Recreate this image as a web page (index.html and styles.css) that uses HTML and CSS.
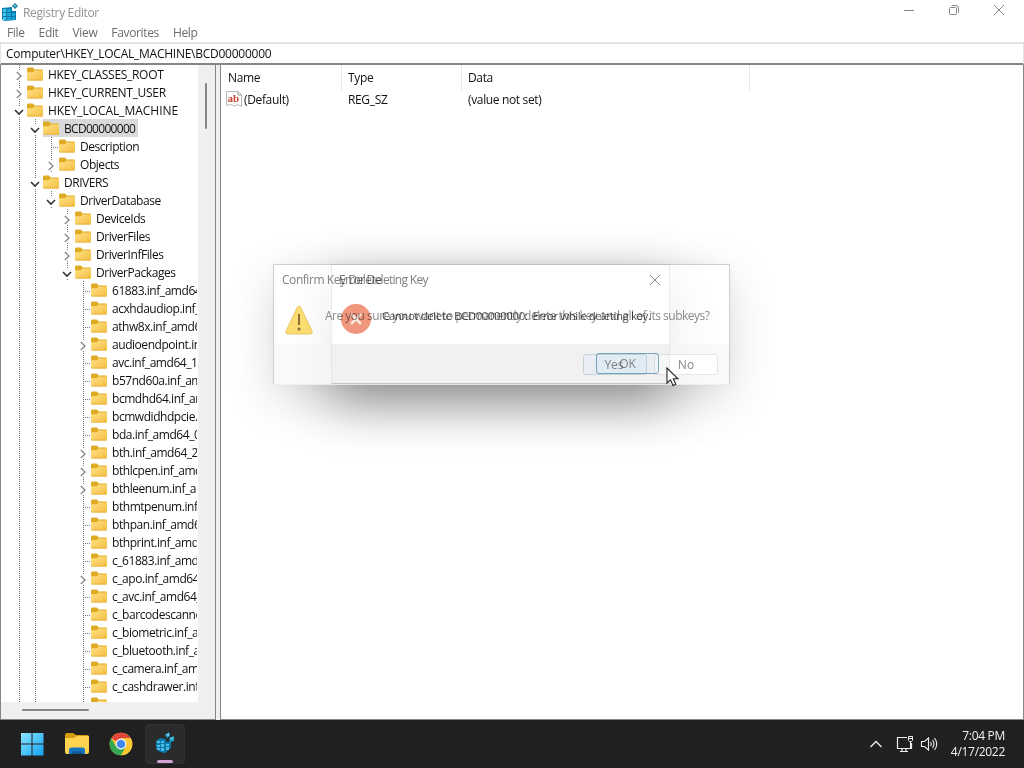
FILE: index.html
```html
<!DOCTYPE html>
<html lang="en">
<head>
<meta charset="UTF-8">
<meta name="viewport" content="width=device-width, initial-scale=1.0">
<title>Registry Editor</title>
<link rel="stylesheet" href="styles.css">
</head>
<body>

<!-- shared icons -->
<svg class="defs" width="0" height="0">
  <defs>
    <linearGradient id="folderFill" x1="0" y1="0" x2="1" y2="1"><stop offset="0" stop-color="#ffe28a"/><stop offset="1" stop-color="#f4bd3d"/></linearGradient>
    <linearGradient id="winFill" x1="0" y1="0" x2="1" y2="1"><stop offset="0" stop-color="#8be6fd"/><stop offset="1" stop-color="#12a2f4"/></linearGradient>
  </defs>
  <symbol id="folder" viewBox="0 0 16 14">
    <path d="M0 2Q0 .5 1.2 .5H6L7.600 2.500H14.8Q16 2.500 16 3.700V8H0Z" fill="#dfab22"/>
    <path d="M0 5.200H5.800L7.600 3.500H16V12.500Q16 13.500 15 13.500H1Q0 13.500 0 12.500Z" fill="url(#folderFill)"/>
    <path d="M.5 13.100H15.5" stroke="#e5ad38" stroke-width=".8"/>
  </symbol>
  <symbol id="right" viewBox="0 0 10 10"><path d="M2.8 1L7 5L2.8 9" fill="none" stroke="#8b8b8b" stroke-width="1.4"/></symbol>
  <symbol id="down" viewBox="0 0 10 10"><path d="M1 3L5 7L9 3" fill="none" stroke="#333" stroke-width="1.6"/></symbol>
</svg>

<div class="window">
  <div class="titlebar">
    <svg class="app-icon" width="17" height="18" viewBox="0 0 17 18">
      <path d="M0 5L10 4V8H14V17L2 18L0 16Z" fill="#087ca9"/>
      <path d="M1 6h3v3H1zM1 10h3v3H1zM1 14h3v3H1z" fill="#45c7ee"/>
      <path d="M5 6h4v3H5zM5 10h4v3H5zM5 14h4v3H5zM10 10h3v3h-3zM10 14h3v3h-3z" fill="#19a4d5"/>
      <path d="M13 0L16 3L13 6L10 3Z" fill="#19799b"/><path d="M13 1.2L14.7 3L13 4.2L11.3 3Z" fill="#5cc2df"/>
    </svg>
    <span class="title">Registry Editor</span>
    <div class="controls">
      <svg width="12" height="12"><path d="M1 6.5H11" stroke="#888"/></svg>
      <svg width="12" height="12"><path d="M3.5 1.5H8Q10.500 1.500 10.500 4V8.500" fill="none" stroke="#888"/><rect x="1.500" y="3.500" width="7" height="7" rx="1" fill="none" stroke="#888"/></svg>
      <svg width="12" height="12"><path d="M1 1L11 11M11 1L1 11" stroke="#888"/></svg>
    </div>
  </div>
  <div class="menu"><span>File</span><span>Edit</span><span>View</span><span>Favorites</span><span>Help</span></div>
  <div class="address"><span>Computer\HKEY_LOCAL_MACHINE\BCD00000000</span></div>

  <div class="panes">
    <div class="tree-pane">
      <div class="tree" id="tree"></div>
      <div class="vscroll"><div class="vthumb"></div></div>
      <div class="hscroll"><div class="hthumb"></div></div>
    </div>
    <div class="values">
      <div class="cols head"><span>Name</span><span>Type</span><span>Data</span></div>
      <div class="cols value">
        <span><svg width="16" height="16" viewBox="0 0 16 16"><path d="M.5 .5H12L15.500 4V15.500L12 13.500L9 15L5 13.500L.5 14.500Z" fill="#fff" stroke="#bbb"/><path d="M12 .5V4H15.500" fill="none" stroke="#999"/><text x="1.500" y="11" class="ab">ab</text></svg>(Default)</span>
        <span>REG_SZ</span><span>(value not set)</span>
      </div>
    </div>
  </div>
</div>

<div class="taskbar">
  <div class="apps">
    <div class="app"><svg width="24" height="24"><path d="M1 1H11.500V11.500H1ZM12.500 1H23.500V11.500H12.500ZM1 12.500H11.500V23.500H1ZM12.500 12.500H23.500V23.500H12.500Z" fill="url(#winFill)"/></svg></div>
    <div class="app"><svg width="26" height="24"><path d="M1 3Q1 1 3 1H9L12 3H23Q25 3 25 5V12H1Z" fill="#d79b10"/><path d="M1 6H10L13 4H25V20Q25 22 23 22H3Q1 22 1 20Z" fill="#ffd34f"/><path d="M5 22V18Q5 15.500 7.500 15.500H18.500Q21 15.500 21 18V22Z" fill="#1474bd"/><path d="M8 22V19.500H18V22Z" fill="#0c5a99"/></svg></div>
    <div class="app"><svg width="24" height="24" viewBox="0 0 24 24"><circle cx="12" cy="12" r="11.300" fill="#fbc934"/><path d="M12 12L2.200 6.300A11.300 11.300 0 0 1 21.800 6.300H12Z" fill="#e0483b"/><path d="M2.200 6.300L7.500 15.200L12 17L12 23.300A11.300 11.300 0 0 1 2.200 6.300Z" fill="#36a852"/><path d="M12 23.300L17 14.500L12 12L7.500 15.200L11 18Z" fill="#36a852"/><path d="M12 23.300L17.200 14.500V6.300H21.800A11.300 11.300 0 0 1 12 23.300Z" fill="#fbc934"/><circle cx="12" cy="12" r="5.400" fill="#fff"/><circle cx="12" cy="12" r="4.300" fill="#4286ef"/></svg></div>
    <div class="app active"><svg width="20" height="22" viewBox="0 0 20 22"><path d="M1 9L5 6L11 7V10L16 9V16L10 21L5 20L1 17Z" fill="#087aaa"/><path d="M2 9h3v2H2zM2 13h3v2H2zM2 16h3v2H2zM6 9h3v2H6zM6 12h3v3H6zM6 16h3v3H6zM11 12h3v2h-3zM11 15h3v3h-3z" fill="#4fb9e2"/><path d="M10 3L14 0L15 4L12 6ZM14 6L19 4V9L15 10Z" fill="#249fcb"/><path d="M11 3L14 1V4ZM15 6L18 5V7Z" fill="#79d4ef"/></svg></div>
  </div>
  <div class="tray">
    <svg class="up" width="14" height="10"><path d="M1.500 8L7 2.500L12.500 8" fill="none" stroke="#eee" stroke-width="1.300"/></svg>
    <svg class="net" width="18" height="18"><path d="M11 2.500H1.500V13.500H15.500V8M6 13.500V16.500M10 13.500V16.500M4 16.500H12" fill="none" stroke="#eee" stroke-width="1.200"/><path d="M12.500 1.500H16.500V5.500L15.500 6.500H13.500L12.500 5.500ZM14.500 6.500V13.500M12.500 3.500H16.500" fill="none" stroke="#eee"/></svg>
    <svg width="18" height="16"><path d="M1.500 5.500H4.500L8.500 2V14L4.500 10.500H1.500Z" fill="none" stroke="#eee" stroke-width="1.100"/><path d="M10.500 6Q12 8 10.500 10M12.500 4Q15.500 8 12.500 12M14.500 2Q19 8 14.500 14" fill="none" stroke="#eee" stroke-width="1.100"/></svg>
    <div class="clock"><span>7:04 PM</span><span>4/17/2022</span></div>
  </div>
</div>

<!-- one dialog fading out while the next fades in -->
<div class="shadow"></div>
<div class="dialog confirm">
  <div class="dialog-title">Confirm Key Delete</div>
  <div class="dialog-body">
    <svg width="28" height="30" viewBox="0 0 28 30"><path d="M12.500 2Q14 0 15.500 2L27 26Q28 29 25 29H3Q0 29 1 26Z" fill="#fbdc70" stroke="#e7c769"/><path d="M14 9V20" stroke="#8b7138" stroke-width="2"/><circle cx="14" cy="24" r="1.600" fill="#8b7138"/></svg>
    <span>Are you sure you want to permanently delete this key and all of its subkeys?</span>
  </div>
  <div class="dialog-foot"><button class="primary">Yes</button><button>No</button></div>
</div>
<div class="dialog error">
  <div class="dialog-title">Error Deleting Key
    <svg width="12" height="12"><path d="M1 1L11 11M11 1L1 11" stroke="#888"/></svg>
  </div>
  <div class="dialog-body">
    <svg width="32" height="32" viewBox="0 0 32 32"><circle cx="16" cy="16" r="15" fill="#f0977d"/><path d="M11 11L21 21M21 11L11 21" stroke="#fce8e2" stroke-width="2.500"/></svg>
    <span>Cannot delete BCD00000000:&nbsp; Error while deleting key.</span>
  </div>
  <div class="dialog-foot"><button class="primary">OK</button></div>
</div>

<svg class="pointer" width="13" height="20" viewBox="0 0 13 20"><path d="M1 1V16L4.500 12.800L7 18.500L9.800 17.300L7.300 11.800H12Z" fill="#fff" stroke="#222" stroke-width="1.100"/></svg>

<script>
// [guides of the ancestors, node type, name]
// type: > closed, v open, - no children
const rows = [
  ['', '>', 'HKEY_CLASSES_ROOT'],
  ['', '>', 'HKEY_CURRENT_USER'],
  ['', 'v', 'HKEY_LOCAL_MACHINE'],
  ['|', 'v', 'BCD00000000'],
  ['||', '-', 'Description'],
  ['||', '>', 'Objects'],
  ['|', 'v', 'DRIVERS'],
  ['||', 'v', 'DriverDatabase'],
  ['|| ', '>', 'DeviceIds'],
  ['|| ', '>', 'DriverFiles'],
  ['|| ', '>', 'DriverInfFiles'],
  ['|| ', 'v', 'DriverPackages']
];
const packages = [
  '61883.inf_amd64_6', 'acxhdaudiop.inf_amd', 'athw8x.inf_amd64', '>audioendpoint.inf', 'avc.inf_amd64_1f', 'b57nd60a.inf_amd64',
  'bcmdhd64.inf_amd64', 'bcmwdidhdpcie.inf', 'bda.inf_amd64_0b', '>bth.inf_amd64_2e', '>bthlcpen.inf_amd64', '>bthleenum.inf_amd64',
  'bthmtpenum.inf_amd', 'bthpan.inf_amd64', 'bthprint.inf_amd64', 'c_61883.inf_amd64', '>c_apo.inf_amd64_6', 'c_avc.inf_amd64_6',
  'c_barcodescanner.inf', 'c_biometric.inf_amd', 'c_bluetooth.inf_amd', 'c_camera.inf_amd64', 'c_cashdrawer.inf', ''
];
packages.forEach(p => {
  const open = p[0] === '>';
  rows.push(['||  ', open ? '>' : '-', open ? p.slice(1) : p]);
});

const tree = document.getElementById('tree');
rows.forEach(([guides, type, name]) => {
  let html = '';
  for (const g of guides) html += `<i class="cell${g === '|' ? ' line' : ''}"></i>`;
  if (type === '-') {
    html += '<i class="cell line leaf"></i>';
  } else {
    html += `<i class="cell line"><svg width="10" height="10"><use href="#${type === 'v' ? 'down' : 'right'}"/></svg></i>`;
  }
  let cls = 'label';
  if (name.startsWith('HKEY')) cls += ' hive';
  if (name === 'HKEY_LOCAL_MACHINE') cls += ' wide';
  if (name === 'BCD00000000') cls += ' selected';
  html += `<span class="${cls}"><svg width="16" height="14"><use href="#folder"/></svg>${name}</span>`;
  const row = document.createElement('div');
  row.className = 'row';
  row.innerHTML = html;
  tree.appendChild(row);
});
</script>

</body>
</html>
```
FILE: styles.css
```css
* { box-sizing: border-box; }
body {
  margin: 0;
  width: 1024px; height: 768px;
  position: relative; overflow: hidden;
  font-family: "Open Sans", "Noto Sans", sans-serif;
  font-size: 12px; letter-spacing: -0.35px;
  color: #111; background: #fff;
}
svg { display: block; flex: none; }
.defs { position: absolute; }
.window { height: 720px; display: flex; flex-direction: column; }
.titlebar {
  height: 24px; flex: none;
  display: flex; align-items: center;
  padding-left: 2px; color: #929292;
}
.app-icon { margin-top: -1px; }
.title { margin-left: 4px; }
.controls {
  display: flex; gap: 33px;
  margin: -4px 19px 0 auto;
}
.menu {
  height: 18px; flex: none;
  display: flex; align-items: center; gap: 14px;
  padding: 0 0 1px 7px; color: #6b6b6b;
}
.address {
  height: 23px; flex: none;
  display: flex; align-items: center;
  padding-left: 5px; letter-spacing: -0.25px;
  border: 1px solid #e4e4e4; border-top-width: 2px;
  border-bottom: 2px solid #858585;
}

/* panes */
.panes { flex: 1; min-height: 0; display: flex; gap: 4px; background: #f0f0f0; }
.tree-pane {
  width: 216px;
  display: grid; grid-template: 1fr 17px / 1fr 17px;
  border: solid #858585; border-width: 0 1px 1px;
  background: #f0f0f0;
}
.tree {
  grid-column: 1; min-height: 0; height: 637px;
  overflow: hidden; background: #fff;
  border-right: 1px solid #fff;
}
.vscroll { grid-column: 2; grid-row: 1; }
.vthumb { width: 2px; height: 46px; margin: 18px 0 0 7px; background: #858585; border-radius: 1px; }
.hscroll { grid-column: 1; grid-row: 2; }
.hthumb { width: 67px; height: 2px; margin: 7px 0 0 21px; background: #858585; border-radius: 1px; }
.row { height: 18px; display: flex; padding-left: 10px; white-space: nowrap; }
.cell {
  width: 16px; flex: none;
  display: flex; align-items: center; justify-content: center;
}
.cell svg { background: #fff; margin: 3px 1px 0 0; }
.line { background: repeating-linear-gradient(#777 0 1px, #fff 1px 2px) 8px 0 / 1px 100% no-repeat; }
.leaf {
  background:
    repeating-linear-gradient(#777 0 1px, #fff 1px 2px) 8px 0 / 1px 100% no-repeat,
    repeating-linear-gradient(90deg, #777 0 1px, #fff 1px 2px) 8px 10px / 7px 1px no-repeat;
}
.label { display: flex; align-items: center; gap: 5px; padding-right: 3px; letter-spacing: -0.45px; }
.hive { letter-spacing: -0.3px; }
.wide { letter-spacing: -0.05px; }
.selected { background: #d9d9d9; letter-spacing: -0.7px; }
.values { flex: 1; border: solid #858585; border-width: 0 1px 1px; background: #fff; }
.cols { display: grid; grid-template-columns: 121px 120px 288px; }
.head { height: 25px; align-items: stretch; }
.head span { border-right: 1px solid #e8e8e8; line-height: 26px; padding-left: 6px; }
.head span:first-child { padding-left: 7px; }
.value { height: 18px; align-items: center; }
.value span { padding-left: 6px; }
.value span:first-child { display: flex; align-items: center; gap: 2px; padding-left: 5px; }
.ab { font: bold 11px "Liberation Serif", serif; fill: #c6402e; letter-spacing: 0; }

/* taskbar */
.taskbar {
  height: 48px;
  display: flex; align-items: center; justify-content: space-between;
  background: #202020; color: #f2f2f2;
}
.apps { display: flex; gap: 4px; padding-left: 12px; }
.app {
  width: 40px; height: 40px; border-radius: 4px;
  display: flex; flex-direction: column; align-items: center; justify-content: center;
}
.app:nth-child(n+2) { margin-left: 1px; margin-right: -1px; }
.active { background: #2b2b2b; border: 1px solid #333; padding-top: 7px; justify-content: flex-start; }
.active::after { content: ""; width: 16px; height: 3px; margin-top: 6px; border-radius: 2px; background: #d2a3d3; }
.tray { display: flex; align-items: center; padding-right: 19px; }
.net { margin: 0 6px 0 13px; }
.clock {
  width: 67px; display: flex; flex-direction: column;
  text-align: right; line-height: 16px; letter-spacing: -0.3px;
}

/* dialogs */
.dialog {
  position: absolute; top: 264px;
  height: 121px;
  display: flex; flex-direction: column;
  border: 1px solid rgba(120, 120, 120, .35);
  color: #8a8a8a;
}
.dialog-title { height: 29px; flex: none; display: flex; align-items: center; justify-content: space-between; padding: 0 8px; color: #808080; }
.dialog-body { height: 50px; flex: none; display: flex; white-space: nowrap; }
.dialog-foot { flex: 1; display: flex; justify-content: flex-end; }
.dialog button {
  width: 64px; height: 21px; padding: 0;
  font: inherit; color: #888;
  border: 1px solid #e6e6e6; border-radius: 3px;
  background: #fff;
}
.shadow {
  position: absolute; left: 331px; top: 264px;
  width: 339px; height: 120px;
  box-shadow: 0 19px 52px rgba(0, 0, 0, .38);
}
.confirm {
  left: 273px; width: 457px;
  background: rgba(255, 255, 255, .78);
  border-bottom-color: rgba(120, 120, 120, .1);
  box-shadow: 0 14px 48px rgba(0, 0, 0, .15), 0 0 8px rgba(0, 0, 0, .03);
}
.confirm .dialog-title { letter-spacing: -0.45px; }
.confirm .dialog-body { padding: 11px 0 0 11px; gap: 12px; letter-spacing: -0.5px; }
.confirm .dialog-body span { margin-top: 2px; }
.confirm .dialog-foot { background: rgba(243, 243, 243, .5); padding: 10px 11px 0; gap: 7px; }
.confirm .primary { background: #f0f6fb; border-color: #cbd8e0; padding-right: 2px; }
/* multiply keeps the fading dialog readable below */
.error {
  left: 331px; width: 339px; height: 120px;
  mix-blend-mode: multiply;
  border-color: rgba(120, 120, 120, .15);
  border-bottom-color: rgba(120, 120, 120, .4);
}
.error .dialog-body { padding: 9px 0 0 8px; gap: 10px; color: #555; font-size: 11.5px; letter-spacing: -0.44px; }
.error .dialog-body span { margin-top: 5px; }
.error .dialog-title { letter-spacing: -0.7px; padding-left: 7px; }
.error .dialog-foot { background: rgba(230, 230, 230, .3); padding: 9px 10px 0; }
.error .primary { width: 63px; background: rgba(205, 230, 250, .2); border-color: #7ba7bf; }
.pointer { position: absolute; left: 666px; top: 367px; }
```
